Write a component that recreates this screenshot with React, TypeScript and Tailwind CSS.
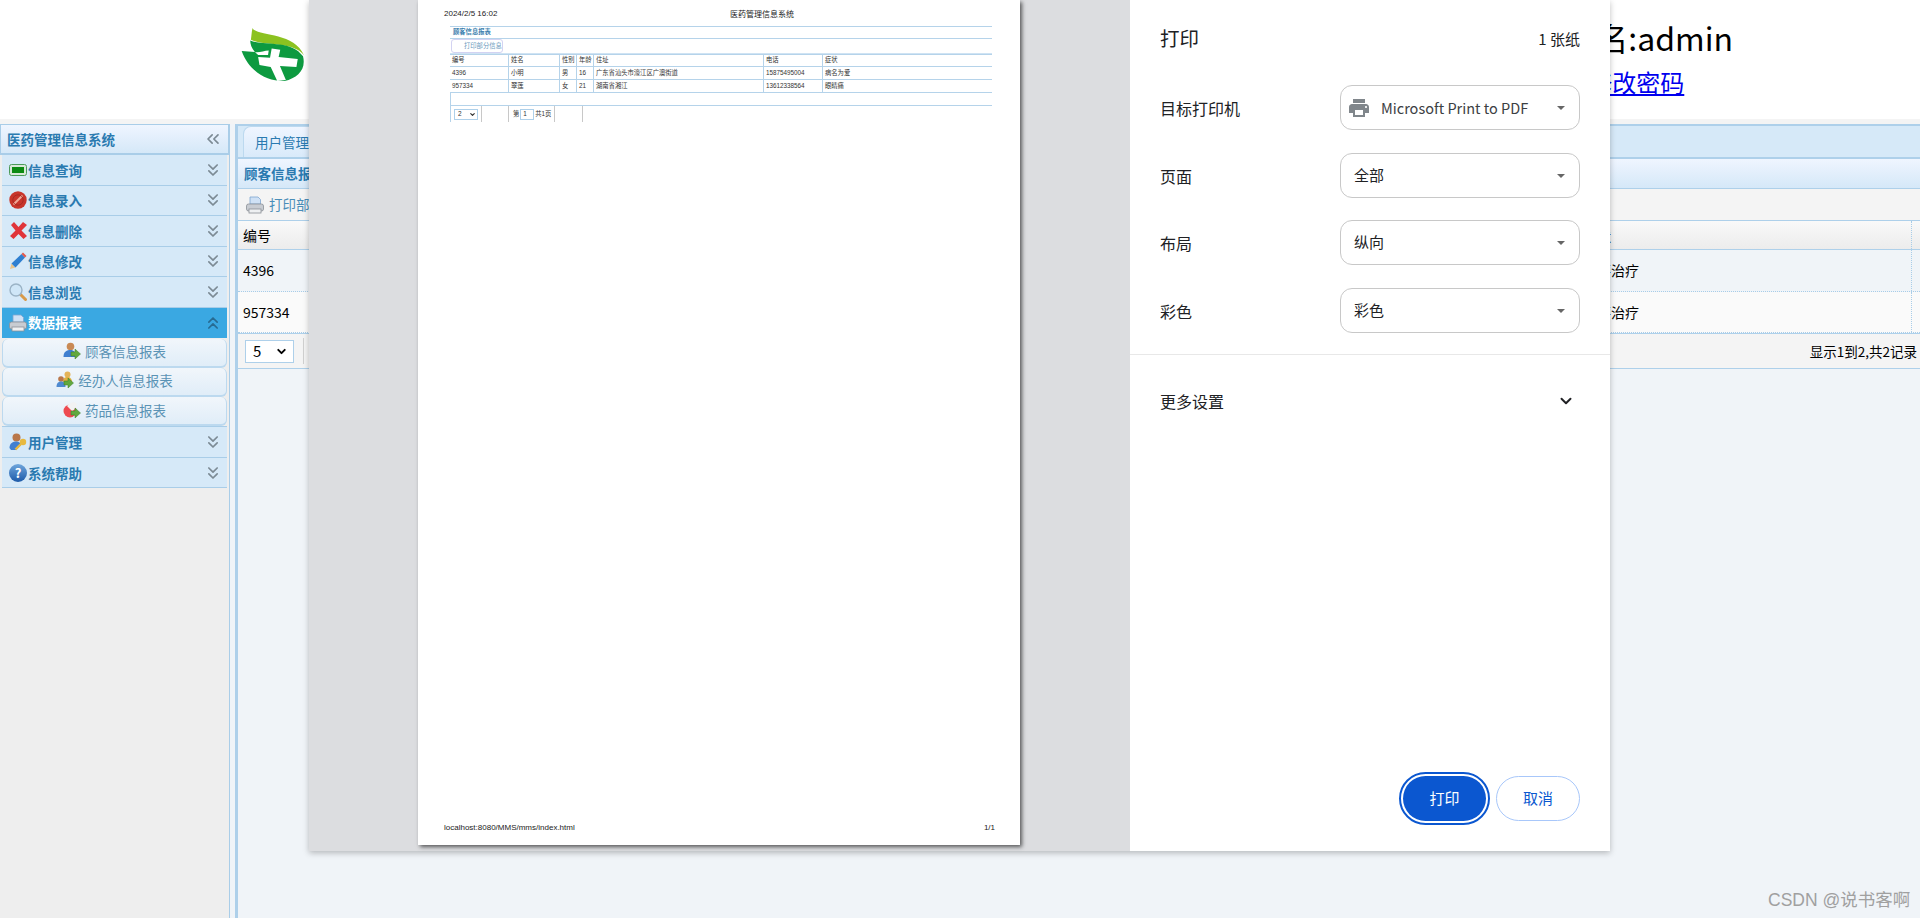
import { ChevronDown, ChevronsDown, ChevronsLeft, ChevronsUp } from "lucide-react";
import type { ReactNode } from "react";

function Logo() {
  return (
    <svg className="w-[64px] h-[56px]" viewBox="720 80 194 168">
      <path d="M755 82 C765 108 880 92 911 165 C880 122 790 138 750 118 C752 105 752 95 755 82 Z" fill="#8cc220" />
      <path d="M748 120 C790 138 872 116 908 168 C918 208 892 234 852 243 C800 245 745 215 722 152 L762 155 C752 142 748 132 748 120 Z" fill="#0d9a40" />
      {/* white cross and the small notch on its upper left */}
      <path d="M813 144 L839 148 L834 170 L892 176 L888 200 L838 197 L856 240 L830 243 L810 200 L776 194 L772 170 L808 172 Z" fill="#fff" />
      <path d="M762 155 C775 158 790 150 804 150 L802 164 L772 164 Z" fill="#fff" />
    </svg>
  );
}

function BatteryIcon() {
  return (
    <svg className="w-[18px] h-[14px]" viewBox="0 0 18 14">
      <rect x="0.5" y="1.5" width="17" height="11" rx="2" fill="#d8e8d8" stroke="#4b9a5a" />
      <rect x="3" y="4" width="12" height="6" fill="#0c8a12" />
    </svg>
  );
}

function StopIcon() {
  return (
    <svg className="w-[18px] h-[18px]" viewBox="0 0 18 18">
      <circle cx="9" cy="9" r="8.7" fill="#c8352b" />
      <path d="M4.5 13.5 L13.5 4.5" stroke="#f0a898" strokeWidth="2" />
      <circle cx="9" cy="9" r="5.2" fill="none" stroke="#a82a22" strokeWidth="1" />
    </svg>
  );
}

function CrossIcon() {
  return (
    <svg className="w-[19px] h-[19px]" viewBox="0 0 19 19">
      <path d="M2 4 L5 1 L9.5 6 L14 1 L18 4 L12.5 9.5 L18 15 L14.5 18 L9.5 13 L4.5 18 L1 15 L6.5 9.5 Z" fill="#e0343a" />
    </svg>
  );
}

function PencilIcon() {
  return (
    <svg className="w-[18px] h-[18px]" viewBox="0 0 18 18">
      <path d="M1 17 L2.5 11.5 L6.5 15.5 Z" fill="#e9c48a" />
      <path d="M2.5 11.5 L12.5 2 L16 5.5 L6.5 15.5 Z" fill="#2f7fd0" />
      <path d="M12.5 2 L14 0.5 L17.5 4 L16 5.5 Z" fill="#e2574c" />
    </svg>
  );
}

function SearchIcon() {
  return (
    <svg className="w-[18px] h-[18px]" viewBox="0 0 18 18">
      <path d="M11 11 L16.5 16.5" stroke="#d89a4a" strokeWidth="3" strokeLinecap="round" />
      <circle cx="7" cy="7" r="6" fill="#cfe6f7" stroke="#9bb3c6" strokeWidth="1.4" />
    </svg>
  );
}

function PrinterIcon() {
  return (
    <svg className="w-[18px] h-[18px]" viewBox="0 0 18 18">
      <path d="M4 8 L4 1 L12 1 L14.5 3.5 L14.5 8 Z" fill="#cfe1f5" stroke="#7fa6d0" strokeWidth="0.8" />
      <rect x="0.5" y="8" width="17" height="7" rx="2" fill="#c8ccd2" stroke="#8b9097" strokeWidth="0.8" />
      <rect x="3" y="13" width="12" height="4" fill="#eef0f2" stroke="#8b9097" strokeWidth="0.8" />
    </svg>
  );
}

function ArrowBadge() {
  return <path d="M8 10 L12 10 L12 7 L17.5 12 L12 17 L12 14 L8 14 Z" fill="#62a83e" stroke="#3f7f2a" strokeWidth="0.5" />;
}

function CustomerIcon() {
  return (
    <svg className="w-[18px] h-[18px]" viewBox="0 0 18 18">
      <circle cx="7.5" cy="4.5" r="3.8" fill="#c98a55" />
      <path d="M0.5 15 C0.5 9.5 4 8 7.5 8 C11 8 13 10 13 15 Z" fill="#3f7fd0" />
      <ArrowBadge />
    </svg>
  );
}

function AgentIcon() {
  return (
    <svg className="w-[18px] h-[18px]" viewBox="0 0 18 18">
      <circle cx="11.5" cy="3.5" r="3" fill="#e4b45a" />
      <path d="M7 11 C7 7 9 6 11.5 6 C14.5 6 16 8 16 11 Z" fill="#e0b040" />
      <circle cx="5" cy="8" r="2.8" fill="#b9774a" />
      <path d="M0.5 16 C0.5 12 2.5 10.5 5 10.5 C8 10.5 9.5 12 9.5 16 Z" fill="#4f8ad0" />
      <ArrowBadge />
    </svg>
  );
}

function PillIcon() {
  return (
    <svg className="w-[18px] h-[18px]" viewBox="0 0 18 18">
      <circle cx="7" cy="10" r="6.5" fill="#ee4a50" />
      <path d="M4 5 C6 2 11 0 13 2 C15 4 13 8 9 10 Z" fill="#f2f2f2" />
      <ArrowBadge />
    </svg>
  );
}

function UserKeyIcon() {
  return (
    <svg className="w-[18px] h-[18px]" viewBox="0 0 18 18">
      <circle cx="7.5" cy="4.5" r="4" fill="#b9774a" />
      <path d="M0.5 15 C0.5 10 4 8.5 7.5 8.5 C10 8.5 11.5 10 12 12 L7 17 L2 17 Z" fill="#3f7fd0" />
      <circle cx="14" cy="9" r="3.2" fill="#e8b93f" />
      <path d="M12 11 L6.5 16.5" stroke="#e8b93f" strokeWidth="2.4" />
    </svg>
  );
}

function HelpIcon() {
  return (
    <div className="w-[18px] h-[18px] rounded-full bg-gradient-to-b from-[#6fa6dc] to-[#1d5aa8] flex items-center justify-center text-white text-[13px] leading-none font-bold">
      ?
    </div>
  );
}

const MENU_TOP: { label: string; icon: ReactNode }[] = [
  { label: "信息查询", icon: <BatteryIcon /> },
  { label: "信息录入", icon: <StopIcon /> },
  { label: "信息删除", icon: <CrossIcon /> },
  { label: "信息修改", icon: <PencilIcon /> },
  { label: "信息浏览", icon: <SearchIcon /> },
];

const SUB_ITEMS: { label: string; icon: ReactNode }[] = [
  { label: "顾客信息报表", icon: <CustomerIcon /> },
  { label: "经办人信息报表", icon: <AgentIcon /> },
  { label: "药品信息报表", icon: <PillIcon /> },
];

const MENU_BOTTOM: { label: string; icon: ReactNode }[] = [
  { label: "用户管理", icon: <UserKeyIcon /> },
  { label: "系统帮助", icon: <HelpIcon /> },
];

function MenuRow({ label, icon }: { label: string; icon: ReactNode }) {
  return (
    <div className="h-[30.5px] mx-[2px] border-b border-[#a9cde8] bg-[#d6e9f8] flex items-center pl-[6px] pr-[4px]">
      <div className="w-[20px] flex justify-center">{icon}</div>
      <span className="text-[13.5px] font-bold text-[#2a7ab0]">{label}</span>
      <ChevronsDown className="ml-auto w-[20px] h-[20px] text-[#7c8a94]" strokeWidth={2} />
    </div>
  );
}

function Sidebar() {
  return (
    <aside className="w-[230px] shrink-0 bg-[#eeeeee] border-r border-[#a9cde8]">
      <div className="h-[31px] border border-[#a9cde8] border-b-2 bg-gradient-to-b from-[#eff5ff] to-[#d5e8f8] flex items-center pl-[6px] pr-[5px]">
        <span className="text-[13.5px] font-bold text-[#2a7ab0]">医药管理信息系统</span>
        <ChevronsLeft className="ml-auto w-[20px] h-[20px] text-[#7c8a94]" strokeWidth={2} />
      </div>
      {MENU_TOP.map((m) => (
        <MenuRow key={m.label} label={m.label} icon={m.icon} />
      ))}
      <div className="h-[30px] mx-[2px] bg-[#3aa8e2] flex items-center pl-[6px] pr-[4px]">
        <div className="w-[20px] flex justify-center">
          <PrinterIcon />
        </div>
        <span className="text-[13.5px] font-bold text-white">数据报表</span>
        <ChevronsUp className="ml-auto w-[20px] h-[20px] text-[#276b92]" strokeWidth={2} />
      </div>
      <div className="mx-[2px] pt-[1px] border-b border-[#a9cde8]">
        {SUB_ITEMS.map((s) => (
          <div
            key={s.label}
            className="h-[29.3px] rounded-[6px] border-b-2 border-x border-[#bcd9ef] bg-gradient-to-b from-[#f1f6fb] to-[#e0edf8] flex items-center justify-center gap-[4px] pb-[2px]"
          >
            {s.icon}
            <span className="text-[13.5px] text-[#5a93b5]">{s.label}</span>
          </div>
        ))}
      </div>
      {MENU_BOTTOM.map((m) => (
        <MenuRow key={m.label} label={m.label} icon={m.icon} />
      ))}
    </aside>
  );
}

const GRID = "grid grid-cols-[220px_220px_120px_120px_300px_360px_334px]";
const COLUMNS = ["编号", "姓名", "性别", "年龄", "住址", "电话", "症状"];
const ROWS = [
  ["4396", "小明", "男", "16", "广东省汕头市濠江区广澳街道", "15875495004", "需要治疗"],
  ["957334", "翠莲", "女", "21", "湖南省湘江", "13612338564", "需要治疗"],
];

function Content() {
  return (
    <section className="flex-1 ml-[5px] border-l-[3px] border-[#aed0ea] min-w-0">
      <div className="h-[35px] border-y-2 border-[#aed0ea] bg-[#d6e9f8] flex items-end pl-[5px]">
        <div className="h-[31px] w-[100px] rounded-t-[8px] border border-b-0 border-[#bcd9ef] bg-gradient-to-b from-[#eff5ff] to-[#d9eafa] flex items-center pl-[11px] text-[13.5px] text-[#2a7ab0]">
          用户管理
        </div>
      </div>
      <div className="h-[30px] border-b border-[#aed0ea] bg-gradient-to-b from-[#eff5ff] to-[#d5e8f8] flex items-center pl-[6px]">
        <span className="text-[13.5px] font-bold text-[#2a7ab0]">顾客信息报表</span>
      </div>
      <div className="h-[32px] border-b border-[#aed0ea] bg-[#f4f4f4] flex items-center pl-[8px] gap-[5px]">
        <PrinterIcon />
        <span className="text-[13.5px] text-[#4a8db8]">打印部分信息</span>
      </div>
      <div className={`${GRID} h-[29px] border-b border-[#aed0ea] bg-gradient-to-b from-[#f9f9f9] to-[#ececec] text-[14px] text-black items-center`}>
        {COLUMNS.map((c, i) => (
          <div key={c} className={`pl-[5px] h-full flex items-center ${i === 6 ? "border-r border-dotted border-[#a9cde8]" : ""}`}>
            {c}
          </div>
        ))}
      </div>
      {ROWS.map((row, r) => (
        <div
          key={row[0]}
          className={`${GRID} text-[14px] text-black border-b border-dotted border-[#a9cde8] ${r === 0 ? "h-[42px] bg-[#f0f4f8]" : "h-[41px] bg-[#fafafa]"}`}
        >
          {row.map((cell, i) => (
            <div key={i} className={`pl-[5px] h-full flex items-center ${i === 6 ? "border-r border-dotted border-[#a9cde8]" : ""}`}>
              {cell}
            </div>
          ))}
        </div>
      ))}
      <div className="h-[36px] border-y border-[#aed0ea] bg-[#f4f4f4] flex items-center pl-[7px] pr-[3px] text-[13.5px] text-black">
        <div className="w-[49px] h-[23px] border border-[#aed0ea] bg-white flex items-center pl-[7px] text-[15px]">
          5
          <ChevronDown className="ml-auto mr-[5px] w-[13px] h-[13px]" strokeWidth={3.5} />
        </div>
        <div className="w-px h-[26px] bg-[#d0d0d0] ml-[9px]" />
        <span className="ml-auto">显示1到2,共2记录</span>
      </div>
    </section>
  );
}

function PreviewTable() {
  const cols = "grid grid-cols-[59px_51px_17px_17px_170px_59px_169px]";
  const cell = "border-r border-[#b5d3ea] pl-[2px] flex items-center";
  const data = [
    ["编号", "姓名", "性别", "年龄", "住址", "电话", "症状"],
    ["4396", "小明", "男", "16", "广东省汕头市濠江区广澳街道", "15875495004", "病名为爱"],
    ["957334", "翠莲", "女", "21", "湖南省湘江", "13612338564", "眼睛痛"],
  ];
  return (
    <div className="mt-[7px] w-[542px] text-[6.3px] leading-none text-[#333]">
      <div className="h-[13px] border-y border-[#b5d3ea] pl-[3px] flex items-center text-[#3c7fae] font-bold">顾客信息报表</div>
      <div className="h-[15px] border-b border-[#cfe3f3] flex items-center pl-[1px]">
        <div className="h-[14px] w-[52px] rounded-[3px] border border-[#d3d3f2] flex items-center pl-[12px] whitespace-nowrap text-[#6a9bbd]">打印部分信息</div>
      </div>
      {data.map((row, r) => (
        <div key={row[0]} className={`${cols} h-[13px] border-b border-[#b5d3ea] ${r === 0 ? "border-t" : ""}`}>
          {row.map((c, i) => (
            <div key={i} className={i === 6 ? "pl-[2px] flex items-center" : cell}>
              {c}
            </div>
          ))}
        </div>
      ))}
      <div className="h-[13px] border-b border-l border-[#b5d3ea]" />
      <div className="h-[16px] flex items-center border-l border-[#b5d3ea]">
        <div className="w-[31px] h-full border-r border-[#c8c8c8] flex items-center pl-[3px]">
          <div className="w-[24px] h-[11px] border border-[#aed0ea] flex items-center pl-[3px] text-[6.5px]">
            2
            <ChevronDown className="ml-auto mr-[1px] w-[7px] h-[7px]" strokeWidth={4} />
          </div>
        </div>
        <div className="w-[27px] h-full border-r border-[#c8c8c8]" />
        <div className="w-[46px] h-full border-r border-[#c8c8c8] flex items-center pl-[4px] gap-[1px]">
          第
          <div className="w-[14px] h-[11px] border border-[#aed0ea] flex items-center pl-[2px]">1</div>
          共1页
        </div>
        <div className="w-[28px] h-full border-r border-[#c8c8c8]" />
      </div>
    </div>
  );
}

function PreviewPage() {
  return (
    <div className="w-[602px] h-[845px] bg-white shadow-[2px_2px_4px_rgba(0,0,0,0.6)] flex flex-col pt-[9px] pl-[26px] pr-[25px] pb-[12px] font-['Liberation_Sans','Noto_Sans_CJK_SC',sans-serif]">
      <div className="flex text-[8px] leading-[10px] text-[#222]">
        <span className="w-[286px]">2024/2/5 16:02</span>
        <span className="font-['Noto_Sans_CJK_SC',sans-serif]">医药管理信息系统</span>
      </div>
      <div className="pl-[6px]">
        <PreviewTable />
      </div>
      <div className="mt-auto flex justify-between text-[8px] leading-[10px] text-[#222]">
        <span>localhost:8080/MMS/mms/index.html</span>
        <span>1/1</span>
      </div>
    </div>
  );
}

const SETTINGS = [
  { label: "目标打印机", value: "Microsoft Print to PDF", printer: true, gap: "mt-[36px]" },
  { label: "页面", value: "全部", printer: false, gap: "mt-[23px]" },
  { label: "布局", value: "纵向", printer: false, gap: "mt-[22px]" },
  { label: "彩色", value: "彩色", printer: false, gap: "mt-[23px]" },
];

function PrintPanel() {
  return (
    <div className="w-[480px] bg-white flex flex-col text-[#202124]">
      <div className="px-[30px] pt-[27px] flex items-center justify-between h-[49px]">
        <span className="text-[19.5px] leading-none">打印</span>
        <span className="text-[15px] leading-none">1 张纸</span>
      </div>
      <div className="px-[30px]">
        {SETTINGS.map((s) => (
          <div key={s.label} className={`flex items-center justify-between ${s.gap}`}>
            <span className="text-[16px]">{s.label}</span>
            <div className="w-[240px] h-[45px] rounded-[12px] border border-[#c8c8c8] flex items-center pl-[13px] pr-[14px] text-[15px]">
              {s.printer && (
                <svg className="w-[24px] h-[24px] mr-[10px] -ml-[7px] shrink-0" viewBox="0 0 24 24" fill="#80868b">
                  <path d="M19 8H5c-1.66 0-3 1.34-3 3v6h4v4h12v-4h4v-6c0-1.66-1.34-3-3-3zm-3 11H8v-5h8v5zm3-7c-.55 0-1-.45-1-1s.45-1 1-1 1 .45 1 1-.45 1-1 1zm-1-9H6v4h12V3z" />
                </svg>
              )}
              <span className={s.printer ? "text-[14.5px] text-[#3c4043]" : ""}>{s.value}</span>
              <div className="ml-auto w-0 h-0 border-x-[4px] border-t-[4px] border-x-transparent border-t-[#666]" />
            </div>
          </div>
        ))}
      </div>
      <div className="h-px bg-[#e8e8e8] mt-[21px]" />
      <div className="px-[30px] mt-[34px] flex items-center justify-between">
        <span className="text-[16px]">更多设置</span>
        <ChevronDown className="w-[18px] h-[18px] mr-[5px] text-[#202124]" strokeWidth={2.6} />
      </div>
      <div className="mt-auto pb-[26px] pr-[30px] flex items-center justify-end gap-[6px]">
        <div className="w-[91px] h-[53px] rounded-full border-2 border-[#0b57d0] p-[2px]">
          <div className="w-full h-full rounded-full bg-[#0b57d0] flex items-center justify-center text-white text-[15px]">打印</div>
        </div>
        <div className="w-[84px] h-[45px] rounded-full border border-[#a8c7fa] flex items-center justify-center text-[#0b57d0] text-[15px]">取消</div>
      </div>
    </div>
  );
}

export default function App() {
  return (
    <div className="relative w-[1920px] h-[918px] overflow-hidden flex flex-col bg-[#f0f4f8] font-['Noto_Sans_CJK_SC',sans-serif]">
      <header className="h-[119px] shrink-0 bg-white flex justify-between">
        <div className="pl-[241px] pt-[27px]">
          <Logo />
        </div>
        <div className="mr-[187px] pt-[13px] flex flex-col text-black">
          <span className="text-[32px] leading-[48px]">用户名:admin</span>
          <a href="#" className="ml-[56px] text-[24px] leading-[34px] mt-[4px] text-[#0000ee] underline">修改密码</a>
        </div>
      </header>
      <div className="h-[5px] shrink-0 bg-[#f4f4f4]" />
      <div className="flex-1 flex min-h-0">
        <Sidebar />
        <Content />
      </div>

      {/* print dialog on top of the page */}
      <div className="absolute left-[309px] top-0 w-[1301px] h-[851px] flex bg-[#dcdde0] shadow-[0_2px_6px_rgba(0,0,0,0.25)]">
        <div className="w-[821px] pl-[109px]">
          <PreviewPage />
        </div>
        <PrintPanel />
      </div>

      <span className="absolute left-[1768px] top-[890px] text-[17.5px] leading-[20px] text-[#a0a0a0] font-['Liberation_Sans','Noto_Sans_CJK_SC',sans-serif]">CSDN @说书客啊</span>
    </div>
  );
}
